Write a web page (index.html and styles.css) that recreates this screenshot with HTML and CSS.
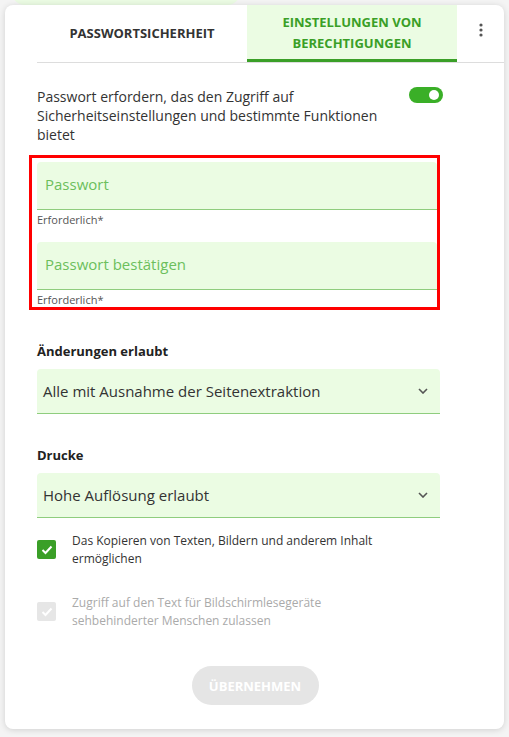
FILE: index.html
```html
<!DOCTYPE html>
<html lang="de">
<head>
<meta charset="UTF-8">
<meta name="viewport" content="width=device-width, initial-scale=1.0">
<title>Berechtigungen</title>
<link rel="stylesheet" href="styles.css">
</head>
<body>
    <div class="backdrop-pill"></div>
    <div class="card">
        <div class="tabs">
            <div class="tab">PASSWORTSICHERHEIT</div>
            <div class="tab active">EINSTELLUNGEN VON<br>BERECHTIGUNGEN</div>
            <div class="menu">
                <svg width="4" height="14" viewBox="0 0 4 14"><circle cx="2" cy="2" r="1.6" fill="#555"/><circle cx="2" cy="7" r="1.6" fill="#555"/><circle cx="2" cy="12" r="1.6" fill="#555"/></svg>
            </div>
        </div>

        <div class="content">
            <div class="require-row">
                <p>Passwort erfordern, das den Zugriff auf Sicherheitseinstellungen und bestimmte Funktionen bietet</p>
                <div class="toggle"><span class="knob"></span></div>
            </div>

            <div class="highlight">
                <div class="field">
                    <div class="input">Passwort</div>
                    <div class="hint">Erforderlich*</div>
                </div>
                <div class="field">
                    <div class="input">Passwort bestätigen</div>
                    <div class="hint">Erforderlich*</div>
                </div>
            </div>

            <label class="group-label">Änderungen erlaubt</label>
            <div class="select">
                <span>Alle mit Ausnahme der Seitenextraktion</span>
                <svg width="10" height="6" viewBox="0 0 10 6"><path d="M1 1l4 4 4-4" fill="none" stroke="#555" stroke-width="1.6"/></svg>
            </div>

            <label class="group-label">Drucke</label>
            <div class="select">
                <span>Hohe Auflösung erlaubt</span>
                <svg width="10" height="6" viewBox="0 0 10 6"><path d="M1 1l4 4 4-4" fill="none" stroke="#555" stroke-width="1.6"/></svg>
            </div>

            <div class="check-row">
                <span class="box checked">
                    <svg width="12" height="10" viewBox="0 0 12 10"><path d="M1.5 5l3 3 6-6.5" fill="none" stroke="#fff" stroke-width="2"/></svg>
                </span>
                <span class="check-text">Das Kopieren von Texten, Bildern und anderem Inhalt ermöglichen</span>
            </div>

            <div class="check-row disabled">
                <span class="box">
                    <svg width="12" height="10" viewBox="0 0 12 10"><path d="M1.5 5l3 3 6-6.5" fill="none" stroke="#fff" stroke-width="2"/></svg>
                </span>
                <span class="check-text">Zugriff auf den Text für Bildschirmlesegeräte sehbehinderter Menschen zulassen</span>
            </div>

            <div class="actions">
                <button class="apply" disabled>ÜBERNEHMEN</button>
            </div>
        </div>
    </div>
</body>
</html>
```

FILE: styles.css
```css
body {
    margin: 0;
    padding: 5px 5px 8px 5px;
    background-color: #f4f4f4;
    font-family: "Open Sans", Arial, sans-serif;
    color: #333;
}

.backdrop-pill {
    position: absolute;
    top: -20px;
    left: 12px;
    width: 228px;
    height: 25px;
    border-radius: 14px;
    background-color: #ebfbe3;
}

.card {
    position: relative;
    background-color: #fff;
    border-radius: 8px;
    box-shadow: 0 1px 6px rgba(0, 0, 0, 0.15);
    height: 724px;
    box-sizing: border-box;
}

.tabs {
    display: flex;
    margin-left: 32px;
    height: 57px;
    border-bottom: 1px solid #ddd;
}

.tab {
    width: 210px;
    display: flex;
    align-items: center;
    justify-content: center;
    text-align: center;
    font-size: 13px;
    font-weight: 700;
    line-height: 21px;
    color: #333;
}

.tab.active {
    background-color: #ebfce3;
    color: #3a9f27;
    border-bottom: 3px solid #3a9f27;
    padding-top: 1px;
}

.menu {
    flex: 1;
    display: flex;
    justify-content: center;
    padding-top: 18px;
}

.content {
    padding: 24px 64px 0 32px;
}

.require-row {
    display: flex;
    justify-content: space-between;
    align-items: flex-start;
}

.require-row p {
    margin: 0;
    width: 362px;
    font-size: 14px;
    line-height: 19px;
    color: #333;
}

.toggle {
    width: 34px;
    height: 16px;
    border-radius: 8px;
    background-color: #3aaf27;
    margin-top: 0;
    margin-right: -3px;
    display: flex;
    align-items: center;
    justify-content: flex-end;
    padding-right: 4px;
    box-sizing: border-box;
}

.knob {
    width: 10px;
    height: 10px;
    border-radius: 50%;
    background-color: #fff;
}

.highlight {
    border: 3px solid #f00;
    margin: 11px 0 0 -8px;
    padding: 4px 0 0 5px;
    height: 155px;
    box-sizing: border-box;
}

.field {
    margin-bottom: 12px;
}

.input {
    height: 48px;
    background-color: #ebfce3;
    border-bottom: 1px solid #8fcd7e;
    border-radius: 4px 4px 0 0;
    box-sizing: border-box;
    padding: 12px 8px 0 8px;
    font-size: 15px;
    color: #6cbf5c;
}

.hint {
    font-size: 11px;
    color: #555;
    line-height: 20px;
}

.group-label {
    display: block;
    font-size: 13px;
    font-weight: 700;
    color: #222;
    margin-top: 32px;
    margin-bottom: 9px;
}

.select {
    height: 45px;
    background-color: #ebfce3;
    border-bottom: 1px solid #8fcd7e;
    border-radius: 4px 4px 0 0;
    box-sizing: border-box;
    display: flex;
    justify-content: space-between;
    align-items: center;
    padding: 0 12px 0 6px;
    font-size: 15px;
    color: #333;
}

.check-row {
    display: flex;
    gap: 16px;
    margin-top: 14px;
    font-size: 12px;
    line-height: 18px;
    color: #333;
}

.check-row + .check-row {
    margin-top: 26px;
}

.check-row.disabled {
    color: #aaa;
}

.check-text {
    max-width: 330px;
}

.box {
    flex: none;
    width: 19px;
    height: 19px;
    border-radius: 2px;
    background-color: #e6e6e6;
    display: flex;
    align-items: center;
    justify-content: center;
    margin-top: 8px;
}

.box.checked {
    background-color: #3a9f27;
}

.actions {
    display: flex;
    justify-content: center;
    margin-top: 36px;
    padding-left: 33px;
}

.apply {
    width: 127px;
    height: 39px;
    border: none;
    border-radius: 20px;
    background-color: #e5e5e5;
    color: #fff;
    font-family: "Open Sans", Arial, sans-serif;
    font-size: 13px;
    font-weight: 700;
}
```
